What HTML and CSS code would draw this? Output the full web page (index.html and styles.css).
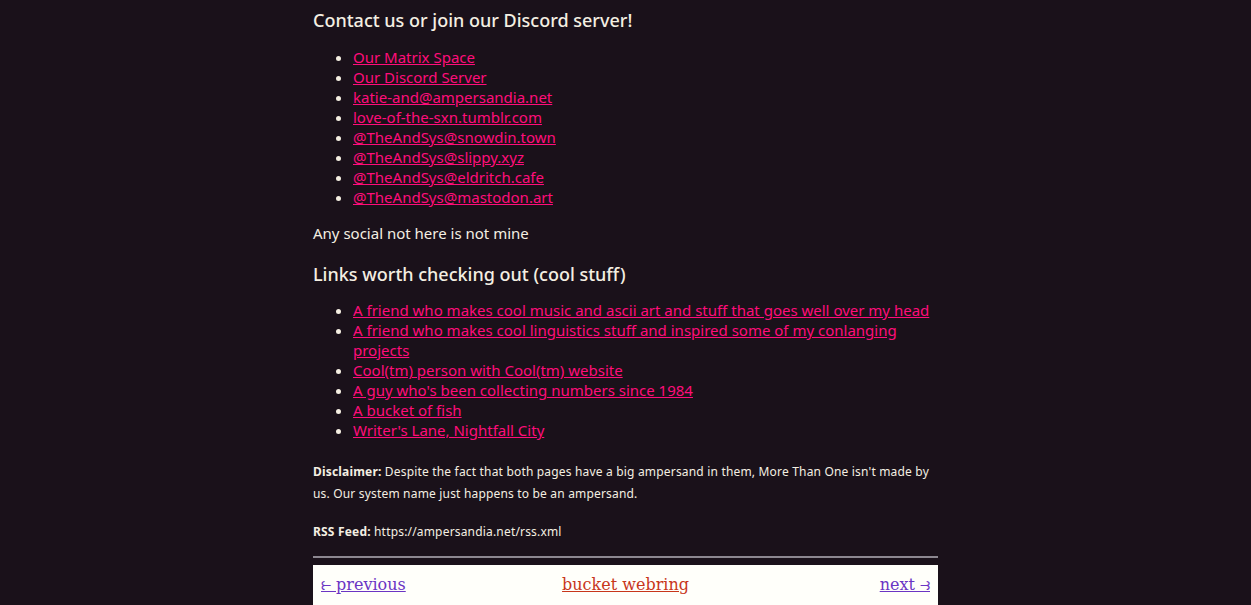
FILE: index.html
```html
<!DOCTYPE html>
<html>
<head>
<meta charset="utf-8">
<link rel="stylesheet" href="styles.css">
</head>
<body>
<main class="page">
  <h2 class="heading">Contact us or join our Discord server!</h2>
  <ul class="links">
    <li><a href="#">Our Matrix Space</a></li>
    <li><a href="#">Our Discord Server</a></li>
    <li><a href="#">katie-and@ampersandia.net</a></li>
    <li><a href="#">love-of-the-sxn.tumblr.com</a></li>
    <li><a href="#">@TheAndSys@snowdin.town</a></li>
    <li><a href="#">@TheAndSys@slippy.xyz</a></li>
    <li><a href="#">@TheAndSys@eldritch.cafe</a></li>
    <li><a href="#">@TheAndSys@mastodon.art</a></li>
  </ul>
  <p class="text">Any social not here is not mine</p>
  <h2 class="heading heading-second">Links worth checking out (cool stuff)</h2>
  <ul class="links links-tail">
    <li><a href="#">A friend who makes cool music and ascii art and stuff that goes well over my head</a></li>
    <li><a href="#">A friend who makes cool linguistics stuff and inspired some of my conlanging projects</a></li>
    <li><a href="#">Cool(tm) person with Cool(tm) website</a></li>
    <li><a href="#">A guy who's been collecting numbers since 1984</a></li>
    <li><a href="#">A bucket of fish</a></li>
    <li><a href="#">Writer's Lane, Nightfall City</a></li>
  </ul>
  <p class="small"><b>Disclaimer:</b> Despite the fact that both pages have a big ampersand in them, More Than One isn't made by us. Our system name just happens to be an ampersand.</p>
  <p class="small"><b>RSS Feed:</b> https://ampersandia.net/rss.xml</p>
  <hr class="rule">
  <nav class="webring">
    <a class="ring-side ring-prev" href="#"><span class="fish">⥼</span> previous</a>
    <a class="ring-name" href="#">bucket webring</a>
    <a class="ring-side ring-next" href="#">next <span class="fish">⥽</span></a>
  </nav>
</main>
</body>
</html>
```

FILE: styles.css
```css
html, body {
  margin: 0;
  padding: 0;
  background: #1a111a;
}
body {
  color: #f4efe2;
  font-family: "Noto Sans", "Open Sans", sans-serif;
  font-size: 15px;
  overflow: hidden;
}
.page {
  width: 625px;
  margin: 0 auto;
  display: flex;
  flex-direction: column;
}
.heading {
  font-size: 18px;
  font-weight: 500;
  line-height: 24px;
  margin: 8px 0 15px 0;
}
.heading-second {
  margin-bottom: 14px;
}
.links {
  margin: 0 0 16px 0;
  padding-left: 40px;
  line-height: 20px;
}
.links-tail {
  margin-bottom: 0;
}
.links a {
  color: #ff0d7a;
}
.text {
  margin: 0 0 11px 0;
  line-height: 20px;
}
.small {
  font-size: 12px;
  letter-spacing: 0.18px;
  line-height: 22px;
  margin: 16px 0 0 0;
}
.links-tail + .small {
  margin-top: 21px;
}
.rule {
  width: 100%;
  margin: 13px 0 7px 0;
  border: 0;
  border-top: 2px solid #8c8790;
}
.webring {
  background: #fffffa;
  display: grid;
  grid-template-columns: 1fr auto 1fr;
  align-items: center;
  padding: 8px 8px 12px 8px;
  font-family: "DejaVu Serif", "Liberation Serif", serif;
  font-size: 16px;
  line-height: 24px;
}
.ring-side {
  color: #6b35c4;
}
.ring-prev {
  justify-self: start;
}
.ring-next {
  justify-self: end;
}
.ring-name {
  color: #c8361a;
}
.fish {
  font-family: "DejaVu Sans", sans-serif;
  font-size: 18px;
  line-height: 0;
}
```
